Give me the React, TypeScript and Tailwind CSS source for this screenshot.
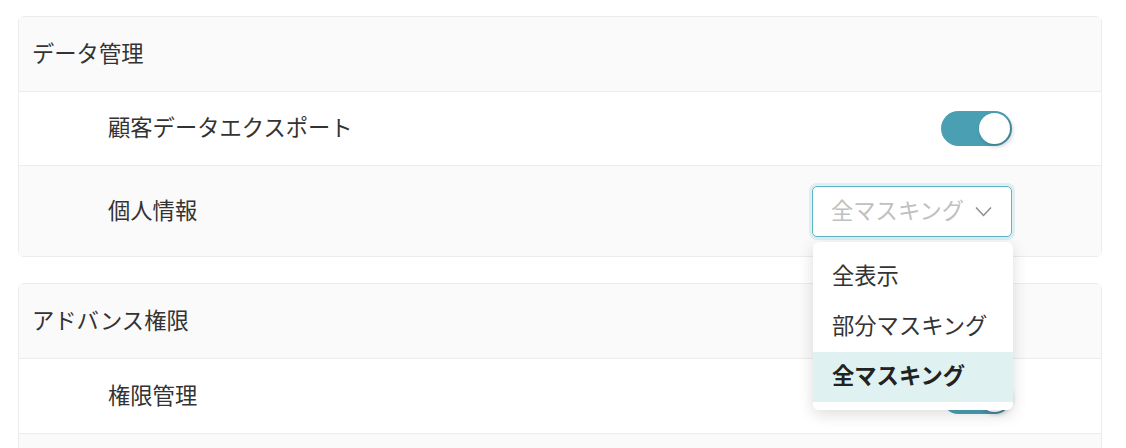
import React from "react";

const font = { fontFamily: '"Noto Sans CJK JP", "Noto Sans", sans-serif' };

function Toggle() {
  return (
    <div className="relative h-[35px] w-[71px] rounded-full bg-[#4aa0b2]">
      <span className="absolute right-[2px] top-[2px] h-[31px] w-[31px] rounded-full bg-white shadow-[2px_2px_5px_rgba(0,0,0,0.25)]" />
    </div>
  );
}

function Chevron() {
  return (
    <svg width="17" height="11" viewBox="0 0 17 11" fill="none" aria-hidden>
      <path d="M1 1.5 L8.5 9.5 L16 1.5" stroke="#8a8a8a" strokeWidth="1.4" />
    </svg>
  );
}

function MaskSelect() {
  const options = ["全表示", "部分マスキング", "全マスキング"];
  return (
    <div className="relative">
      <div className="flex h-[51px] w-[200px] items-center justify-between rounded-[5px] border border-[#5cb6c5] bg-white pl-[18px] pr-[19px] shadow-[0_0_0_3px_rgba(92,182,197,0.18)]">
        <span className="pb-[4px] text-[22.3px] leading-none text-[#c0c0c0]">全マスキング</span>
        <Chevron />
      </div>
      {/* open menu */}
      <ul className="absolute left-[1px] top-[56px] z-10 w-[200px] overflow-hidden rounded-[6px] bg-white pb-[8px] pt-[10px] shadow-[0_4px_16px_rgba(0,0,0,0.14)]">
        {options.map((o, i) => (
          <li
            key={o}
            className={
              i === 2
                ? "flex h-[50px] items-center bg-[#dff2f1] pb-[4px] pl-[19px] text-[22.3px] font-bold leading-none text-[#222]"
                : "flex h-[50px] items-center pb-[4px] pl-[19px] text-[22.3px] leading-none text-[#333]"
            }
          >
            {o}
          </li>
        ))}
      </ul>
    </div>
  );
}

function Row({
  label,
  gray,
  height,
  last,
  children,
}: {
  label: string;
  gray?: boolean;
  height: string;
  last?: boolean;
  children?: React.ReactNode;
}) {
  return (
    <div
      className={[
        "flex items-center justify-between pl-[89px] pr-[89px]",
        height,
        gray ? "bg-[#fafafa]" : "bg-white",
        last ? "" : "border-b border-[#ececec]",
      ].join(" ")}
    >
      <span className="pb-[4px] text-[22.3px] leading-none text-[#333]">{label}</span>
      {children}
    </div>
  );
}

function Header({ title }: { title: string }) {
  return (
    <div className="flex h-[75px] items-center border-b border-[#ececec] bg-[#fafafa] pl-[13px]">
      <span className="pb-[4px] text-[22.3px] leading-none text-[#333]">{title}</span>
    </div>
  );
}

export default function App() {
  return (
    <div className="h-[448px] w-[1126px] overflow-hidden bg-white px-[18px] pt-[16px]" style={font}>
      <div className="flex w-[1084px] flex-col gap-[26px]">
        <section className="rounded-[6px] border border-[#ececec]">
          <Header title="データ管理" />
          <Row label="顧客データエクスポート" height="h-[74px]">
            <Toggle />
          </Row>
          <Row label="個人情報" gray height="h-[90px]" last>
            <MaskSelect />
          </Row>
        </section>

        <section className="rounded-[6px] border border-[#ececec]">
          <Header title="アドバンス権限" />
          <Row label="権限管理" height="h-[75px]">
            <Toggle />
          </Row>
          <Row label="" gray height="h-[75px]" last />
        </section>
      </div>
    </div>
  );
}
